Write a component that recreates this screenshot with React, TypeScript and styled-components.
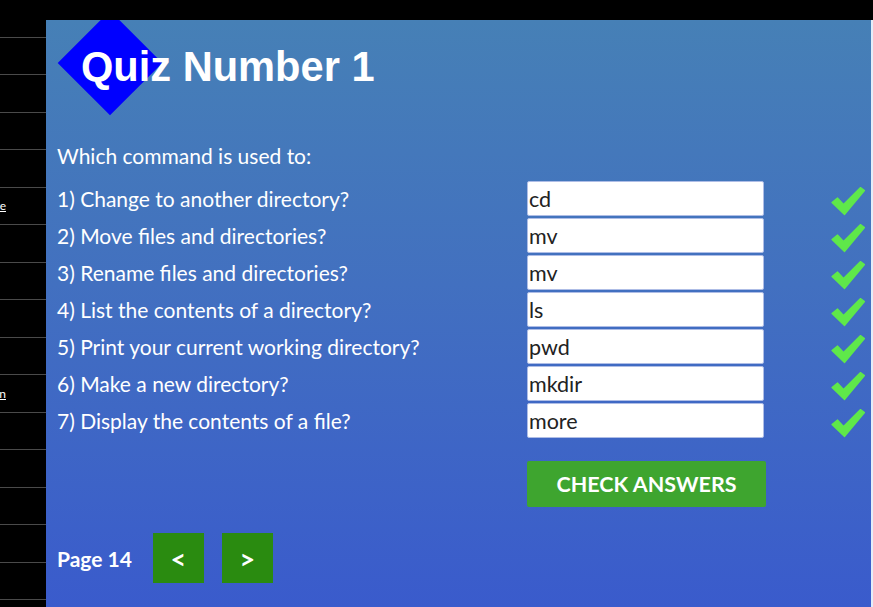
import React from "react";
import styled, { createGlobalStyle } from "styled-components";

const GlobalStyle = createGlobalStyle`
  html, body {
    margin: 0;
    padding: 0;
    background: #000;
    height: 100%;
  }
  #root {
    height: 100%;
  }
`;

type Question = { text: string; answer: string };

const questions: Question[] = [
  { text: "1) Change to another directory?", answer: "cd" },
  { text: "2) Move files and directories?", answer: "mv" },
  { text: "3) Rename files and directories?", answer: "mv" },
  { text: "4) List the contents of a directory?", answer: "ls" },
  { text: "5) Print your current working directory?", answer: "pwd" },
  { text: "6) Make a new directory?", answer: "mkdir" },
  { text: "7) Display the contents of a file?", answer: "more" },
];

const sideItems = [
  "", "", "", "", "", "Quiz Archive", "", "", "", "", "Introduction", "", "", "", "", "",
];

const Check = () => (
  <svg width="34" height="30" viewBox="0 0 34 30">
    <path
      d="M1 16.5 L6.5 12 L12.5 18.5 L29.5 1.5 L33.5 4.5 L13.5 28.5 Z"
      fill="#5fe84a"
      stroke="#5fe84a"
      strokeWidth="1.2"
      strokeLinejoin="round"
    />
  </svg>
);

export default function App() {
  return (
    <>
      <GlobalStyle />
      <Page>
        <Sidebar>
          {sideItems.map((label, i) => (
            <SideItem key={i}>
              <span>{label}</span>
            </SideItem>
          ))}
        </Sidebar>
        <Main>
          <TopBar />
          <Panel>
            <Header>
              <Title>Quiz Number 1</Title>
            </Header>
            <Intro>Which command is used to:</Intro>
            <Rows>
              {questions.map((q, i) => (
                <Row key={i}>
                  <Label>{q.text}</Label>
                  <Answer readOnly value={q.answer} />
                  <Mark>
                    <Check />
                  </Mark>
                </Row>
              ))}
            </Rows>
            <CheckButton>CHECK ANSWERS</CheckButton>
            <Footer>
              <PageLabel>Page 14</PageLabel>
              <NavButton>&lt;</NavButton>
              <NavButton>&gt;</NavButton>
            </Footer>
          </Panel>
        </Main>
        <Edge>
          <EdgeTop />
        </Edge>
      </Page>
    </>
  );
}

const Page = styled.div`
  display: grid;
  grid-template-columns: 46px 1fr 2px;
  height: 607px;
  overflow: hidden;
  font-family: Lato, "Open Sans", sans-serif;
`;

const Sidebar = styled.div`
  display: flex;
  flex-direction: column;
  background: #000;
  overflow: hidden;
`;

const SideItem = styled.div`
  flex: 0 0 37.5px;
  box-sizing: border-box;
  border-bottom: 1px solid #4a4a4a;
  display: flex;
  align-items: center;
  justify-content: flex-end;
  padding-right: 40px;
  overflow: hidden;
  white-space: nowrap;
  span {
    color: #fff;
    font-size: 12px;
    text-decoration: underline;
  }
`;

const Main = styled.div`
  display: flex;
  flex-direction: column;
  min-width: 0;
`;

const TopBar = styled.div`
  flex: 0 0 20px;
  background: #000;
`;

const Panel = styled.div`
  flex: 1 1 auto;
  display: flex;
  flex-direction: column;
  padding-left: 11px;
  background: linear-gradient(180deg, #4680b6 0%, #4270c0 45%, #3a5bcc 100%);
  overflow: hidden;
  color: #fff;
`;

const Header = styled.div`
  position: relative;
  padding: 26px 0 0 24px;
  height: 42px;
  &::before {
    content: "";
    position: absolute;
    left: 16px;
    top: 6px;
    width: 74px;
    height: 74px;
    background: #0000ff;
    transform: rotate(45deg);
  }
`;

const Title = styled.h1`
  position: relative;
  margin: 0;
  font-family: "Liberation Sans", Arial, sans-serif;
  font-weight: bold;
  font-size: 41.6px;
  line-height: 42px;
  color: #fff;
`;

const Intro = styled.div`
  margin-top: 56px;
  font-size: 21px;
  line-height: 24px;
`;

const Rows = styled.div`
  display: flex;
  flex-direction: column;
  gap: 2px;
  margin-top: 13px;
`;

const Row = styled.div`
  display: grid;
  grid-template-columns: 470px 237px 1fr;
  align-items: center;
  height: 35px;
`;

const Label = styled.div`
  font-size: 21px;
  line-height: 24px;
  white-space: nowrap;
`;

const Answer = styled.input`
  box-sizing: border-box;
  width: 237px;
  height: 35px;
  margin: 0;
  padding: 0 0 0 1px;
  border: 1px solid #aebde6;
  border-radius: 2px;
  background: #fff;
  color: #222;
  font-family: Lato, "Open Sans", sans-serif;
  font-size: 21.5px;
  outline: none;
`;

const Mark = styled.div`
  display: flex;
  padding: 5px 0 0 67px;
`;

const CheckButton = styled.button`
  align-self: flex-start;
  margin: 23px 0 0 470px;
  width: 239px;
  height: 46px;
  border: none;
  border-radius: 2px;
  background: #3ea52f;
  color: #fff;
  font-family: Lato, "Open Sans", sans-serif;
  font-weight: bold;
  font-size: 21.5px;
  padding: 0;
`;

const Footer = styled.div`
  display: flex;
  align-items: center;
  margin-top: 26px;
`;

const PageLabel = styled.div`
  font-weight: bold;
  font-size: 21px;
  margin-right: 21px;
`;

const NavButton = styled.button`
  width: 51px;
  height: 50px;
  margin-right: 18px;
  padding: 0;
  border: none;
  background: #2a8b10;
  color: #fff;
  font-family: Lato, "Open Sans", sans-serif;
  font-weight: bold;
  font-size: 27px;
`;

const Edge = styled.div`
  display: flex;
  flex-direction: column;
  background: #e4edf9;
`;

const EdgeTop = styled.div`
  flex: 0 0 20px;
  background: #000;
`;
